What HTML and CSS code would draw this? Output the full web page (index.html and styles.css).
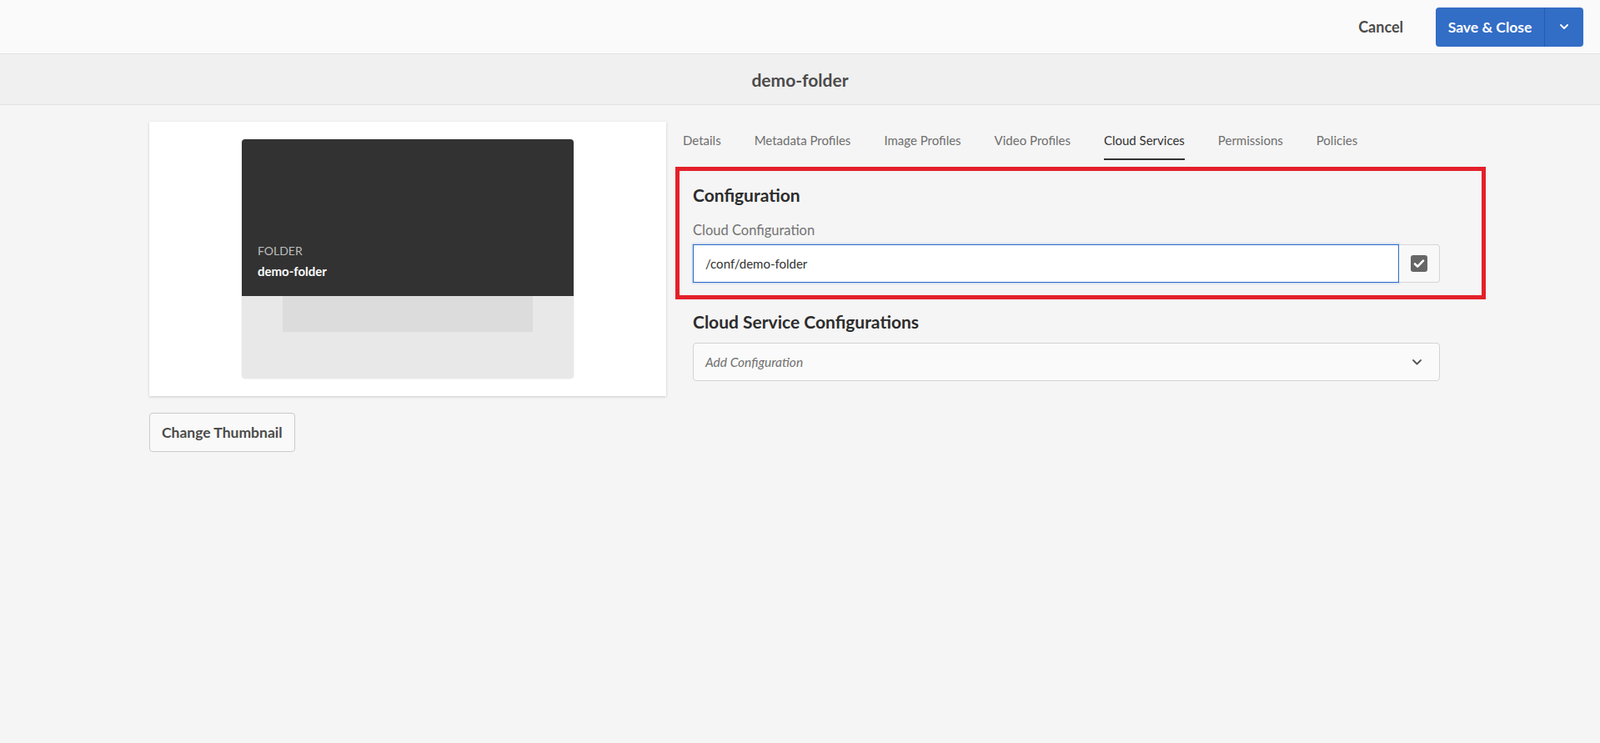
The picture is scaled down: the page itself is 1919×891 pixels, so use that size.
FILE: index.html
```html
<!DOCTYPE html>
<html lang="en">
<head>
    <meta charset="UTF-8">
    <meta name="viewport" content="width=device-width, initial-scale=1.0">
    <title>demo-folder Properties</title>
    <link rel="stylesheet" href="styles.css">
</head>
<body>
    <header class="topbar">
        <button class="btn-quiet">Cancel</button>
        <div class="split-btn">
            <button class="split-main">Save &amp; Close</button>
            <button class="split-toggle" aria-label="More actions">
                <svg width="10" height="6" viewBox="0 0 10 6"><path d="M1 1l4 4 4-4" fill="none" stroke="#fff" stroke-width="1.8" stroke-linecap="round" stroke-linejoin="round"/></svg>
            </button>
        </div>
    </header>

    <div class="titlebar"><h1>demo-folder</h1></div>

    <main class="properties">
        <aside class="thumb-column">
            <div class="thumb-card">
                <div class="thumb">
                    <div class="thumb-info">
                        <span class="thumb-type">FOLDER</span>
                        <span class="thumb-name">demo-folder</span>
                    </div>
                    <div class="thumb-body"><div class="thumb-preview"></div></div>
                </div>
            </div>
            <button class="btn-secondary">Change Thumbnail</button>
        </aside>

        <section class="tab-panel">
            <nav class="tabs">
                <a class="tab">Details</a>
                <a class="tab">Metadata Profiles</a>
                <a class="tab">Image Profiles</a>
                <a class="tab">Video Profiles</a>
                <a class="tab active">Cloud Services</a>
                <a class="tab">Permissions</a>
                <a class="tab">Policies</a>
            </nav>

            <div class="highlight">
                <h2 class="section-title">Configuration</h2>
                <label class="field-label" for="cloudConf">Cloud Configuration</label>
                <div class="field-row">
                    <input class="field-input" id="cloudConf" type="text" value="/conf/demo-folder">
                    <button class="picker-btn" aria-label="Browse">
                        <svg width="20" height="20" viewBox="0 0 20 20"><rect x="0" y="0" width="20" height="20" rx="3" fill="#666"/><path d="M5 10.5l3.2 3.2L15 6.6" fill="none" stroke="#fff" stroke-width="2.6" stroke-linecap="round" stroke-linejoin="round"/></svg>
                    </button>
                </div>
            </div>

            <div class="section">
                <h2 class="section-title">Cloud Service Configurations</h2>
                <div class="select">
                    <span class="select-placeholder">Add Configuration</span>
                    <svg width="11" height="7" viewBox="0 0 11 7"><path d="M1 1l4.5 4.5L10 1" fill="none" stroke="#555" stroke-width="1.8" stroke-linecap="round" stroke-linejoin="round"/></svg>
                </div>
            </div>
        </section>
    </main>
</body>
</html>
```

FILE: styles.css
```css
body {
    margin: 0;
    background-color: #f5f5f5;
    font-family: Lato, "Open Sans", sans-serif;
    color: #4b4b4b;
}
button {
    font-family: inherit;
    cursor: pointer;
}
.topbar {
    height: 65px;
    box-sizing: border-box;
    display: flex;
    justify-content: flex-end;
    align-items: center;
    padding-right: 20px;
    background-color: #fafafa;
    border-bottom: 1px solid #e3e3e3;
}
.btn-quiet {
    height: 47px;
    padding: 0 16px;
    margin-right: 23px;
    border: none;
    background: none;
    font-size: 18px;
    font-weight: 700;
    color: #4b4b4b;
}
.split-btn {
    display: flex;
    height: 47px;
    border-radius: 4px;
    overflow: hidden;
    background-color: #326dc6;
}
.split-main {
    width: 131px;
    border: none;
    background: none;
    color: white;
    font-size: 17.5px;
    font-weight: 700;
    border-right: 1px solid #285cab;
}
.split-toggle {
    width: 46px;
    border: none;
    background: none;
    display: flex;
    align-items: center;
    justify-content: center;
}
.titlebar {
    height: 61px;
    box-sizing: border-box;
    display: flex;
    align-items: center;
    justify-content: center;
    background-color: #f0f0f0;
    border-bottom: 1px solid #e1e1e1;
}
.titlebar h1 {
    margin: 0;
    font-size: 21px;
    font-weight: 700;
    color: #4b4b4b;
}
.properties {
    display: flex;
    gap: 11px;
    padding: 20px 0 0 179px;
}
.thumb-column {
    width: 620px;
    flex-shrink: 0;
}
.thumb-card {
    background: white;
    padding: 21px 0;
    box-shadow: 0 1px 3px rgba(0, 0, 0, 0.18);
}
.thumb {
    width: 398px;
    margin: 0 auto;
    border-radius: 4px;
    overflow: hidden;
    box-shadow: 0 0 0 1px rgba(0, 0, 0, 0.04);
}
.thumb-info {
    height: 188px;
    box-sizing: border-box;
    display: flex;
    flex-direction: column;
    justify-content: flex-end;
    padding: 0 19px 20px;
    background-color: #323232;
}
.thumb-type {
    font-size: 14px;
    line-height: 18px;
    color: #bdbdbd;
}
.thumb-name {
    margin-top: 5px;
    font-size: 15px;
    line-height: 20px;
    font-weight: 700;
    color: white;
}
.thumb-body {
    height: 99px;
    background-color: #e8e8e8;
}
.thumb-preview {
    width: 300px;
    height: 43px;
    margin: 0 auto;
    background-color: #dcdcdc;
}
.btn-secondary {
    margin-top: 20px;
    height: 47px;
    padding: 0 14px;
    border: 1px solid #cacaca;
    border-radius: 4px;
    background-color: #f9f9f9;
    font-size: 17.5px;
    font-weight: 700;
    color: #4b4b4b;
}
.tab-panel {
    width: 972px;
}
.tabs {
    display: flex;
    gap: 40px;
    margin-left: 9px;
}
.tab {
    padding: 11px 0;
    line-height: 22px;
    font-size: 15px;
    color: #6e6e6e;
    border-bottom: 2px solid transparent;
    cursor: pointer;
}
.tab.active {
    color: #323232;
    border-bottom-color: #323232;
}
.highlight {
    margin-top: 8px;
    padding: 17px 50px 15px 16px;
    border: 5px solid #e3202a;
}
.section-title {
    margin: 0;
    font-size: 21px;
    line-height: 24px;
    font-weight: 700;
    color: #2c2c2c;
}
.field-label {
    display: block;
    margin-top: 20px;
    font-size: 16.5px;
    line-height: 20px;
    color: #737373;
}
.field-row {
    display: flex;
    margin-top: 7px;
    height: 46px;
}
.field-input {
    flex: 1;
    box-sizing: border-box;
    height: 46px;
    padding: 0 14px;
    border: 1px solid #2d6cc8;
    box-shadow: 0 0 2px 1px rgba(45, 108, 200, 0.25);
    outline: none;
    font-family: inherit;
    font-size: 15px;
    color: #323232;
    background: white;
}
.picker-btn {
    width: 49px;
    height: 46px;
    display: flex;
    align-items: center;
    justify-content: center;
    border: 1px solid #d6d6d6;
    border-left: none;
    border-radius: 0 4px 4px 0;
    background-color: #f8f8f8;
    padding: 0;
}
.section {
    margin: 15px 0 0 21px;
    width: 896px;
}
.select {
    margin-top: 13px;
    height: 46px;
    box-sizing: border-box;
    display: flex;
    align-items: center;
    justify-content: space-between;
    padding: 0 21px 0 14px;
    border: 1px solid #d3d3d3;
    border-radius: 4px;
    background-color: #fafafa;
}
.select-placeholder {
    font-size: 15.5px;
    font-style: italic;
    color: #707070;
}
```
